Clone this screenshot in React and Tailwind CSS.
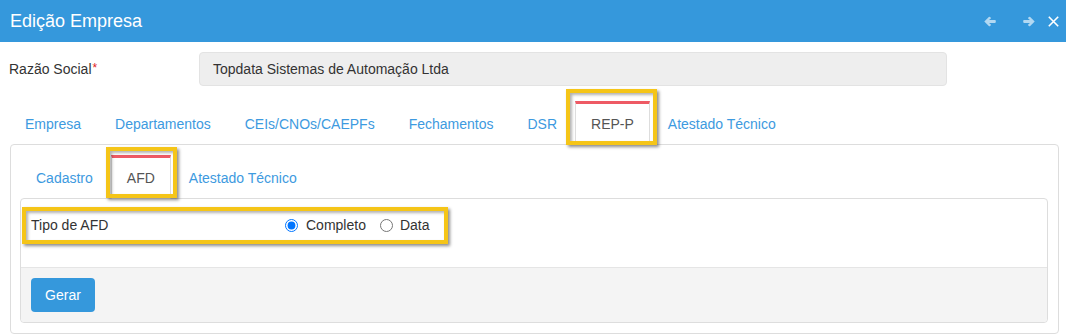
import React from "react";

const yellow =
  "pointer-events-none absolute border-4 border-[#f5c518] shadow-[2px_2px_3px_rgba(0,0,0,0.45),inset_2px_2px_3px_rgba(0,0,0,0.3)]";

function Arrow({ flip, className }) {
  return (
    <svg
      className={className}
      width="12"
      height="11"
      viewBox="0 0 12 11"
      style={flip ? { transform: "scaleX(-1)" } : undefined}
    >
      <path
        d="M0.3 5.5 L4.8 1 Q5.5 0.3 6.2 1 L6.6 1.4 Q7.3 2.1 6.6 2.8 L5 4.1 L11 4.1 Q11.8 4.1 11.8 4.9 L11.8 6.1 Q11.8 6.9 11 6.9 L5 6.9 L6.6 8.2 Q7.3 8.9 6.6 9.6 L6.2 10 Q5.5 10.7 4.8 10 Z"
        fill="rgba(255,255,255,0.62)"
      />
    </svg>
  );
}

function Tab({ label, active, overlay }) {
  return (
    <li className={"relative mr-[2px] -mb-px " + (active ? "z-10" : "")}>
      <div
        className={
          "px-[15px] py-[10px] leading-[20px] text-[14px] border-x border-t-[3px] border-b " +
          (active
            ? "bg-white border-x-[#ddd] border-t-[#ee5a64] border-b-white text-[#555]"
            : "border-transparent text-[#3d9ae0]")
        }
      >
        {label}
      </div>
      {overlay}
    </li>
  );
}

export default function App() {
  return (
    <div className="w-[1066px] h-[335px] bg-white font-['Liberation_Sans',Arial,sans-serif] text-[#333] overflow-hidden">
      {/* Header */}
      <div className="h-[42px] bg-[#3598dc] flex items-center justify-between pl-[10px] pr-[7px]">
        <span className="text-white text-[18px] leading-none">Edição Empresa</span>
        <div className="flex items-center">
          <Arrow />
          <Arrow flip className="ml-[27px]" />
          <svg className="ml-[13px]" width="11" height="11" viewBox="0 0 11 11">
            <path d="M0.8 0.8 L10.2 10.2 M10.2 0.8 L0.8 10.2" stroke="white" strokeWidth="1.6" fill="none" />
          </svg>
        </div>
      </div>

      {/* Razão Social */}
      <div className="flex items-center mt-[10px] pl-[9px]">
        <div className="w-[190px] text-[14px] text-[#333]">
          Razão Social<span className="text-[#e02222] text-[12px] align-top ml-[1px]">*</span>
        </div>
        <div className="w-[748px] h-[34px] bg-[#eeeeee] border border-[#e3e3e3] rounded-[4px] flex items-center pl-[13px] text-[14px] text-[#333]">
          Topdata Sistemas de Automação Ltda
        </div>
      </div>

      {/* Outer tabs */}
      <ul className="flex mt-[15px] ml-[9px]">
        <Tab label="Empresa" />
        <Tab label="Departamentos" />
        <Tab label="CEIs/CNOs/CAEPFs" />
        <Tab label="Fechamentos" />
        <Tab label="DSR" />
        <Tab
          label="REP-P"
          active
          overlay={<div className={yellow + " -left-[9px] -right-[7px] -top-[12px] bottom-0"} />}
        />
        <Tab label="Atestado Técnico" />
      </ul>

      {/* Outer panel */}
      <div className="ml-[10px] w-[1049px] border border-[#ddd] rounded-[4px] pt-[10px] pl-[9px] pr-[10px] pb-[10px]">
        <ul className="flex">
          <Tab label="Cadastro" />
          <Tab
            label="AFD"
            active
            overlay={<div className={yellow + " -left-[5px] -right-[6px] -top-[8px] bottom-px"} />}
          />
          <Tab label="Atestado Técnico" />
        </ul>

        {/* Inner panel */}
        <div className="border border-[#ddd] rounded-[4px]">
          <div className="pt-[8px] pl-[1px] pb-[23px]">
            <div className="w-[426px] h-[37px] border-4 border-[#f5c518] shadow-[2px_2px_3px_rgba(0,0,0,0.45),inset_2px_2px_3px_rgba(0,0,0,0.3)] flex items-center pl-[5px] text-[14px] text-[#333]">
              <span className="w-[254px]">Tipo de AFD</span>
              <input type="radio" name="tipo" defaultChecked className="m-0 w-[13px] h-[13px]" />
              <span className="ml-[8px]">Completo</span>
              <input type="radio" name="tipo" className="m-0 ml-[14px] w-[13px] h-[13px]" />
              <span className="ml-[7px]">Data</span>
            </div>
          </div>
          <div className="border-t border-[#e5e5e5] bg-[#f4f4f4] p-[10px] rounded-b-[4px]">
            <button className="h-[34px] w-[64px] bg-[#3598dc] text-white text-[14px] rounded-[4px]">
              Gerar
            </button>
          </div>
        </div>
      </div>
    </div>
  );
}
